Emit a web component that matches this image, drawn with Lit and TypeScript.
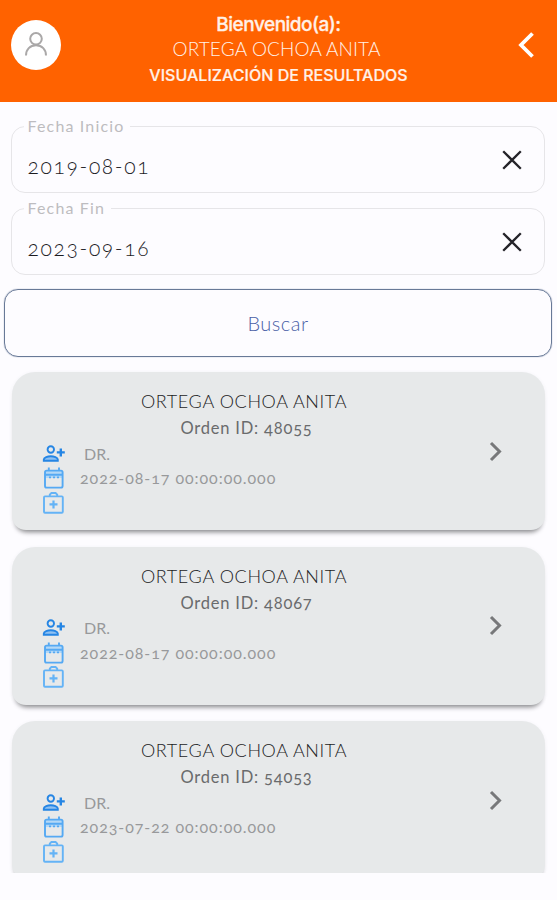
import { LitElement, html, css, svg } from "lit";
import { customElement, property } from "lit/decorators.js";

const base = css`
  :host {
    display: block;
    box-sizing: border-box;
    font-family: Lato, "Open Sans", sans-serif;
    font-variant-numeric: oldstyle-nums;
  }
  svg { display: block; }
`;

@customElement("date-field")
class DateField extends LitElement {
  @property() label = "";
  @property() value = "";

  static styles = [base, css`
    .field {
      box-sizing: border-box;
      height: 75px;
      margin: 0;
      padding: 0 20px 0 15.5px;
      min-width: 0;
      border: 1.5px solid #e6e5e8;
      border-radius: 14px;
    }
    .label {
      margin-left: -4px;
      padding: 0 6px 0 4px;
      height: 16px;
      line-height: 16px;
      font-size: 16px;
      letter-spacing: 1.15px;
      color: #bdbcc0;
    }
    .row { display: flex; align-items: center; justify-content: space-between; height: 53px; }
    .value { font-size: 21px; font-weight: 300; letter-spacing: 1.65px; color: #1c1b1f; padding-top: 9px; }
    .clear { margin-top: -2px; }
  `];

  render() {
    return html`<fieldset class="field">
      <legend class="label">${this.label}</legend>
      <div class="row">
        <span class="value">${this.value}</span>
        <svg class="clear" width="24" height="24" viewBox="0 0 24 24">
          <path d="M3.2 3.2 20.8 20.8M20.8 3.2 3.2 20.8" fill="none" stroke="#242329" stroke-width="2.3"/>
        </svg>
      </div>
    </fieldset>`;
  }
}

const personAdd = svg`<svg width="24" height="24" viewBox="0 0 24 24">
  <g fill="none" stroke="#2585e4" stroke-width="1.9">
    <circle cx="8.8" cy="7.5" r="3.2"/>
    <path d="M1.8 18.8v-1.2c0-2.3 4-3.4 7-3.4s7 1.1 7 3.4v1.2z" fill="#8fc1f2"/>
    <path d="M18.8 6.4v8M14.8 10.4h8" stroke-width="2.4"/>
  </g></svg>`;

const calendar = svg`<svg width="24" height="24" viewBox="0 0 24 24">
  <path d="M3 5h17.6v7H3z" fill="#b4d8f6"/>
  <g fill="none" stroke="#55a9f3" stroke-width="1.9">
    <rect x="3" y="4.6" width="17.6" height="17" rx="1.6"/>
    <path d="M3 8.8h17.6M6.8 1.6v3M17 1.6v3"/>
    <path d="M7 11.4h2M11 11.4h2M15 11.4h2" stroke-width="1.6"/>
  </g></svg>`;

const medical = svg`<svg width="24" height="24" viewBox="0 0 24 24">
  <g fill="none" stroke="#64b3f6" stroke-width="1.9">
    <rect x="2" y="5.4" width="18.8" height="16.4" rx="1"/>
    <path d="M7.8 5.4V3.6l1.6-1.6h4.2l1.6 1.6v1.8"/>
    <path d="M11.5 9.4v8M7.5 13.4h8" stroke-width="2.2"/>
  </g></svg>`;

@customElement("order-card")
class OrderCard extends LitElement {
  @property() name = "";
  @property() order = "";
  @property() date = "";

  static styles = [base, css`
    :host { flex: none; }
    .card {
      box-sizing: border-box;
      height: 158px;
      padding: 17px 41px 0 29px;
      display: grid;
      grid-template-columns: 406px 1fr;
      border-radius: 23px 23px 14px 14px;
      background: #e7e9ea;
      box-shadow: 0 6px 5px -4px #868689, 0 1px 4px #f0f0f3;
    }
    .name, .order { text-align: center; white-space: nowrap; }
    .name { height: 25px; line-height: 25px; font-size: 18px; font-weight: 300; letter-spacing: 0.62px; color: #1c1c1e; }
    .order { height: 27.5px; line-height: 28.5px; font-size: 16.5px; letter-spacing: 0.8px; color: #6a6b6d; padding-left: 5px; }
    .line { display: flex; align-items: center; height: 24.5px; padding-left: 0.5px; font-size: 16px; color: #98999b; }
    .doctor { padding: 0 0 1px 18.5px; letter-spacing: 0; }
    .date { padding: 0 0 1px 14.5px; letter-spacing: 0.94px; white-space: nowrap; }
    .arrow { justify-self: end; margin-top: 50.5px; }
  `];

  render() {
    return html`<div class="card">
      <div>
        <div class="name">${this.name}</div>
        <div class="order">Orden ID: ${this.order}</div>
        <div class="line">${personAdd}<span class="doctor">DR.</span></div>
        <div class="line">${calendar}<span class="date">${this.date}</span></div>
        <div class="line">${medical}</div>
      </div>
      <svg class="arrow" width="16" height="24" viewBox="0 0 16 24">
        <path d="M3 3 11.5 11.5 3 20" fill="none" stroke="#77787a" stroke-width="3"/>
      </svg>
    </div>`;
  }
}

const orders = [
  { id: "48055", date: "2022-08-17 00:00:00.000" },
  { id: "48067", date: "2022-08-17 00:00:00.000" },
  { id: "54053", date: "2023-07-22 00:00:00.000" },
];

@customElement("app-root")
class AppRoot extends LitElement {
  static styles = [base, css`
    :host { height: 900px; background: #fdfcff; overflow: hidden; }
    .header {
      box-sizing: border-box;
      height: 102px;
      padding: 0 21px 0 11px;
      display: grid;
      grid-template-columns: 50px 1fr 20px;
      align-items: start;
      background: #ff6200;
      color: #fff;
    }
    .avatar {
      width: 50px; height: 50px; margin-top: 20px;
      border-radius: 50%; background: #fff;
      display: grid; place-items: center;
    }
    .titles { display: flex; flex-direction: column; align-items: center; padding: 13px 20px 0 0; white-space: nowrap; }
    .welcome { font-family: Inter, sans-serif; font-size: 19px; font-weight: 500; line-height: 24px; letter-spacing: -0.5px; color: #fff1e8; -webkit-text-stroke: 0.3px #fff1e8; }
    .user { font-size: 19px; font-weight: 300; height: 25px; line-height: 24px; letter-spacing: 0.12px; color: #fff1e8; padding-right: 4px; }
    .title { font-family: Inter, sans-serif; font-size: 16px; font-weight: 500; line-height: 26px; letter-spacing: 0.02px; color: #fff1e8; -webkit-text-stroke: 0.2px #fff1e8; }
    .back { margin-top: 31px; }
    .form { display: flex; flex-direction: column; gap: 7px; padding: 16px 12px 0 11px; }
    .search {
      display: block;
      box-sizing: border-box;
      width: 548px; height: 68px;
      margin: 14px 0 0 4px;
      border: 1.5px solid #687997;
      border-radius: 14px;
      background: transparent;
      font: 300 20px Lato, sans-serif;
      letter-spacing: 0.5px;
      color: #4a5fa6;
      padding: 0;
      box-shadow: 0 0 1px #687997;
    }
    .list { box-sizing: border-box; height: 508px; margin-top: 8px; padding: 7px 12px 0; display: flex; flex-direction: column; gap: 16.5px; overflow: hidden; }
  `];

  render() {
    return html`
      <header class="header">
        <div class="avatar">
          <svg width="26" height="28" viewBox="0 0 26 28">
            <g fill="none" stroke="#aaa8a8" stroke-width="2">
              <circle cx="13" cy="7.8" r="5.8"/>
              <path d="M3 24.5c0-6 4-10.2 10-10.2s10 4.2 10 10.2"/>
            </g>
          </svg>
        </div>
        <div class="titles">
          <div class="welcome">Bienvenido(a):</div>
          <div class="user">ORTEGA OCHOA ANITA</div>
          <div class="title">VISUALIZACIÓN DE RESULTADOS</div>
        </div>
        <svg class="back" width="20" height="28" viewBox="0 0 20 28">
          <path d="M16.5 2.5 5 14 16.5 25.5" fill="none" stroke="#fff" stroke-width="3.8"/>
        </svg>
      </header>
      <div class="form">
        <date-field label="Fecha Inicio" value="2019-08-01"></date-field>
        <date-field label="Fecha Fin" value="2023-09-16"></date-field>
      </div>
      <button class="search">Buscar</button>
      <div class="list">
        ${orders.map((o) => html`<order-card name="ORTEGA OCHOA ANITA" order=${o.id} date=${o.date}></order-card>`)}
      </div>`;
  }
}
